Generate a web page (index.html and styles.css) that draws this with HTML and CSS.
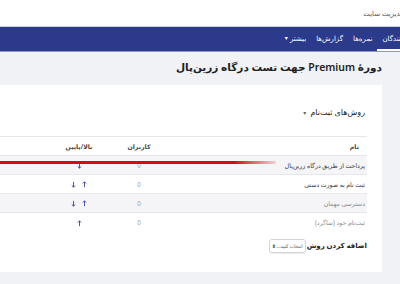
FILE: index.html
```html
<!DOCTYPE html>
<html lang="fa" dir="rtl">
<head>
    <meta charset="UTF-8">
    <meta name="viewport" content="width=device-width, initial-scale=1.0">
    <title>روش‌های ثبت‌نام</title>
    <link rel="stylesheet" href="styles.css">
</head>
<body>
    <header class="topbar">
        <span class="site-name">مدیریت سایت</span>
    </header>

    <nav class="navbar">
        <a class="nav-item active" href="#">شرکت کنندگان</a>
        <a class="nav-item" href="#">نمره‌ها</a>
        <a class="nav-item" href="#">گزارش‌ها</a>
        <a class="nav-item" href="#">بیشتر <span class="caret">▾</span></a>
    </nav>

    <main class="page">
        <h1 class="course-title">دورهٔ Premium جهت تست درگاه زرین‌پال</h1>

        <section class="card">
            <h2 class="section-title">روش‌های ثبت‌نام <span class="caret">▾</span></h2>

            <table class="methods">
                <thead>
                    <tr>
                        <th class="col-name">نام</th>
                        <th class="col-users">کاربران</th>
                        <th class="col-move">بالا/پایین</th>
                        <th class="col-edit"></th>
                    </tr>
                </thead>
                <tbody>
                    <tr>
                        <td class="col-name">پرداخت از طریق درگاه زرین‌پال</td>
                        <td class="col-users">0</td>
                        <td class="col-move">
                            <svg class="arrow down" viewBox="0 0 6 8"><path d="M3 7.2V.8M1 2.8 3 .8l2 2"/></svg>
                        </td>
                        <td class="col-edit"></td>
                    </tr>
                    <tr>
                        <td class="col-name">ثبت نام به صورت دستی</td>
                        <td class="col-users">0</td>
                        <td class="col-move">
                            <svg class="arrow" viewBox="0 0 6 8"><path d="M3 7.2V.8M1 2.8 3 .8l2 2"/></svg>
                            <svg class="arrow down" viewBox="0 0 6 8"><path d="M3 7.2V.8M1 2.8 3 .8l2 2"/></svg>
                        </td>
                        <td class="col-edit"></td>
                    </tr>
                    <tr class="disabled">
                        <td class="col-name">دسترسی مهمان</td>
                        <td class="col-users">0</td>
                        <td class="col-move">
                            <svg class="arrow" viewBox="0 0 6 8"><path d="M3 7.2V.8M1 2.8 3 .8l2 2"/></svg>
                            <svg class="arrow down" viewBox="0 0 6 8"><path d="M3 7.2V.8M1 2.8 3 .8l2 2"/></svg>
                        </td>
                        <td class="col-edit"></td>
                    </tr>
                    <tr class="disabled">
                        <td class="col-name">ثبت‌نام خود (شاگرد)</td>
                        <td class="col-users">0</td>
                        <td class="col-move">
                            <svg class="arrow" viewBox="0 0 6 8"><path d="M3 7.2V.8M1 2.8 3 .8l2 2"/></svg>
                        </td>
                        <td class="col-edit"></td>
                    </tr>
                </tbody>
            </table>

            <div class="add-method">
                <label for="method">اضافه کردن روش</label>
                <div class="select">
                    <span>انتخاب کنید...</span>
                    <span class="select-icon">⬍</span>
                </div>
            </div>

            <!-- annotation arrow drawn over the screenshot -->
            <div class="marker"></div>
        </section>
    </main>
</body>
</html>
```

FILE: styles.css
```css
:root {
    --nav-color: #2b3a8b;
    --page-background: #f1f2f5;
    --text-color: #333;
    --muted-color: #a0a0a0;
    --row-stripe: #f5f5f7;
    --line-color: #e6e7ec;
    --arrow-color: #3a4a9c;
}

* {
    margin: 0;
    padding: 0;
    box-sizing: border-box;
}

body {
    font-family: 'Noto Sans', 'DejaVu Sans', sans-serif;
    background-color: var(--page-background);
    color: var(--text-color);
    width: 400px;
    height: 284px;
    overflow: hidden;
}

.topbar {
    height: 26px;
    background-color: #fff;
    display: flex;
    align-items: center;
    margin-right: -4px;
}

.site-name {
    font-size: 7px;
    color: #555;
}

.navbar {
    height: 26px;
    background-color: var(--nav-color);
    border-top: 1px solid #c8cce4;
    border-bottom: 1px solid #8e95c4;
    display: flex;
    align-items: stretch;
    margin-right: -31px;
}

.nav-item {
    color: #fff;
    text-decoration: none;
    font-size: 7px;
    display: flex;
    align-items: center;
    padding: 0 5px;
    border-bottom: 2px solid transparent;
}

.nav-item.active {
    border-bottom-color: #fff;
}

.caret {
    font-size: 6px;
    margin-right: 2px;
}

.page {
    padding: 7px 18px 0 0;
}

.course-title {
    font-size: 10.5px;
    line-height: 16px;
    font-weight: 600;
    color: #222;
    margin-bottom: 10px;
}

.card {
    position: relative;
    background-color: #fff;
    height: 187px;
    padding: 20px 15px 0 0;
    margin-left: -4px;
}

.section-title {
    font-size: 8px;
    line-height: 14px;
    font-weight: 500;
    color: #222;
    padding-right: 2px;
    margin-bottom: 16px;
}

.section-title .caret {
    color: #666;
    margin-right: 2px;
}

.methods {
    width: 100%;
    border-collapse: collapse;
    font-size: 6.2px;
}

.methods th,
.methods td {
    height: 19px;
    border-top: 1px solid var(--line-color);
    font-weight: normal;
}

.methods th {
    font-weight: 600;
    color: #444;
}

.methods tbody tr:nth-child(odd) {
    background-color: var(--row-stripe);
}

.col-name {
    text-align: right;
    padding-right: 2px;
}

.methods th.col-name {
    padding-right: 8px;
}

.col-users {
    width: 64px;
    text-align: center;
}

.methods td.col-users {
    color: var(--muted-color);
}

.col-move {
    width: 56px;
    text-align: center;
}

.col-edit {
    width: 55px;
}

.disabled .col-name {
    color: #8a8a8a;
}

.arrow {
    width: 5px;
    height: 7px;
    margin: 0 2px;
    vertical-align: middle;
    fill: none;
    stroke: var(--arrow-color);
    stroke-width: 1.1;
}

.arrow.down {
    transform: rotate(180deg);
}

.add-method {
    display: flex;
    align-items: center;
    gap: 1px;
    margin-top: 7px;
}

.add-method label {
    font-size: 7px;
    font-weight: 600;
    color: #222;
}

.select {
    width: 37px;
    height: 14px;
    border: 1px solid #d3d5db;
    border-radius: 3px;
    display: flex;
    align-items: center;
    justify-content: space-between;
    padding: 0 2px;
    font-size: 4.8px;
    color: #555;
    white-space: nowrap;
    box-shadow: 0 1px 1px rgba(0, 0, 0, 0.08);
}

.select-icon {
    font-size: 5px;
    color: #444;
}

.marker {
    position: absolute;
    left: 0;
    top: 76px;
    width: 280px;
    height: 3px;
    background: linear-gradient(to right, #d90812 85%, rgba(217, 8, 18, 0.15));
    border-radius: 0 2px 2px 0;
}
```
